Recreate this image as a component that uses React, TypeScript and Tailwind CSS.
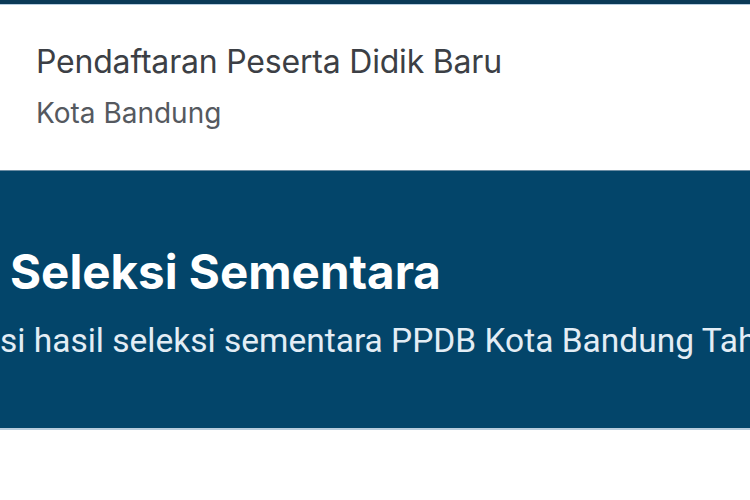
export default function App() {
  return (
    <div className="w-[750px] h-[500px] overflow-hidden bg-white">
      <div className="h-[4px] bg-[#0b3a57]" />
      <div className="h-[1px] bg-[#b7cde0]" />
      <div className="h-[165px] pl-[36px] pt-[37px] flex flex-col" style={{ fontFamily: "Inter, sans-serif" }}>
        <div className="text-[32px] leading-[40px] text-[#3c3f45] tracking-[-0.2px] whitespace-nowrap">Pendaftaran Peserta Didik Baru</div>
        <div className="mt-[14px] text-[28px] leading-[34px] text-[#55595f] whitespace-nowrap">Kota Bandung</div>
      </div>
      <div className="h-[258px] bg-[#03456a] border-t border-[#6b8ca3] overflow-hidden flex flex-col">
        <div className="mt-[73px] pl-[10px] text-[47.5px] leading-[56px] font-bold text-white whitespace-nowrap" style={{ fontFamily: "Inter, sans-serif" }}>Seleksi Sementara</div>
        <div className="mt-[21px] text-[33.5px] leading-[40px] text-[#e3edf5] whitespace-nowrap" style={{ fontFamily: "Roboto, sans-serif" }}>si hasil seleksi sementara PPDB Kota Bandung Tah</div>
      </div>
      <div className="h-[2px] bg-[#b9cddd]" />
    </div>
  );
}
